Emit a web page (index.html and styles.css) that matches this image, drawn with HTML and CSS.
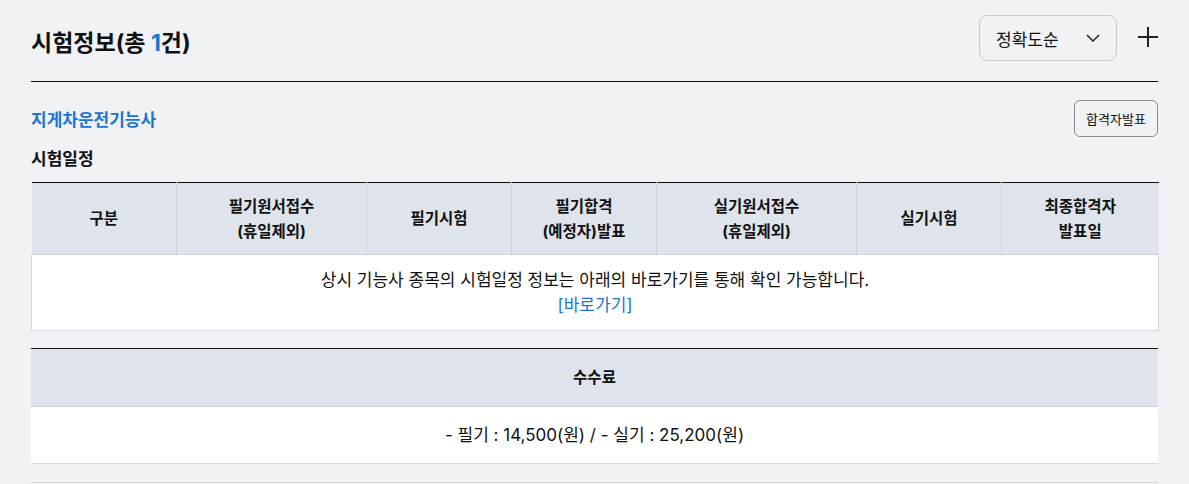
FILE: index.html
```html
<!DOCTYPE html>
<html lang="ko">
<head>
<meta charset="utf-8">
<title>시험정보</title>
<link rel="stylesheet" href="styles.css">
</head>
<body>
<div class="page">
  <div class="top">
    <h1 class="title">시험정보(총 <span class="count">1</span>건)</h1>
    <div class="tools">
      <div class="select">
        <span>정확도순</span>
        <svg class="chev" width="14" height="8" viewBox="0 0 14 8"><path d="M1 1 L7 7 L13 1" fill="none" stroke="#222" stroke-width="1.5"/></svg>
      </div>
      <svg class="plus" width="20" height="20" viewBox="0 0 20 20"><path d="M10 0 V20 M0 10 H20" stroke="#222" stroke-width="2" fill="none"/></svg>
    </div>
  </div>

  <div class="item-head">
    <a class="item-name">지게차운전기능사</a>
    <button class="btn">합격자발표</button>
  </div>
  <h2 class="sub">시험일정</h2>

  <table class="tbl sched">
    <colgroup>
      <col style="width:145px"><col style="width:190px"><col style="width:145px"><col style="width:145px"><col style="width:200px"><col style="width:145px"><col style="width:157px">
    </colgroup>
    <thead>
      <tr>
        <th>구분</th>
        <th>필기원서접수<br>(휴일제외)</th>
        <th>필기시험</th>
        <th>필기합격<br>(예정자)발표</th>
        <th>실기원서접수<br>(휴일제외)</th>
        <th>실기시험</th>
        <th>최종합격자<br>발표일</th>
      </tr>
    </thead>
    <tbody>
      <tr>
        <td colspan="7">상시 기능사 종목의 시험일정 정보는 아래의 바로가기를 통해 확인 가능합니다.<br><a class="link">[바로가기]</a></td>
      </tr>
    </tbody>
  </table>

  <table class="tbl fee">
    <thead><tr><th>수수료</th></tr></thead>
    <tbody><tr><td>- 필기 : 14,500(원) / - 실기 : 25,200(원)</td></tr></tbody>
  </table>

  <div class="next"></div>
</div>
</body>
</html>
```

FILE: styles.css
```css
* { box-sizing: border-box; }
html, body { margin: 0; padding: 0; }
body {
  background: #f1f2f6;
  font-family: "Inter", "Noto Sans CJK KR", sans-serif;
  color: #111;
}
.page {
  width: 1127px;
  margin-left: 31px;
}
.top {
  display: flex;
  justify-content: space-between;
  align-items: flex-start;
  padding-top: 15px;
  padding-bottom: 20px;
  border-bottom: 1px solid #111;
}
.title {
  margin: 12px 0 0;
  font-size: 23px;
  line-height: 32px;
  font-weight: 700;
  color: #111;
}
.count { color: #1b76d3; }
.tools {
  display: flex;
  align-items: center;
  gap: 21px;
}
.select {
  width: 138px;
  height: 46px;
  border: 1px solid #c9cacd;
  border-radius: 8px;
  display: flex;
  align-items: center;
  justify-content: space-between;
  padding: 0 16px 0 16px;
  font-size: 17px;
  color: #111;
}
.chev { display: block; }
.plus { display: block; margin-top: -2px; }
.item-head {
  display: flex;
  justify-content: space-between;
  align-items: center;
  margin-top: 18px;
}
.item-name {
  font-size: 17px;
  font-weight: 600;
  color: #1b76d3;
}
.btn {
  height: 37px;
  width: 84px;
  border: 1px solid #8a8a8a;
  border-radius: 6px;
  background: #f1f2f6;
  font-family: inherit;
  font-size: 13px;
  color: #111;
  padding: 0;
}
.sub {
  margin: 10px 0 0;
  font-size: 17px;
  line-height: 24px;
  font-weight: 700;
}
.tbl {
  width: 100%;
  border-collapse: collapse;
  table-layout: fixed;
  font-size: 17px;
  line-height: 25px;
}
.sched { margin-top: 11px; }
.tbl thead tr { border-top: 1px solid #111; }
.tbl th {
  background: #dfe3eb;
  font-size: 15.5px;
  font-weight: 700;
  text-align: center;
  border-right: 1px solid #cfd2d8;
  border-bottom: 1px solid #cfd2d8;
}
.tbl th:last-child { border-right: none; }
.sched th { height: 72px; padding: 0; }
.tbl td {
  background: #fff;
  text-align: center;
  border: 1px solid #d6d8dc;
  border-top: none;
}
.sched td { height: 76px; padding: 0; }
.link { color: #1b76d3; }
.fee { margin-top: 17px; }
.fee th { height: 58px; padding: 0; border-right: none; }
.fee td { height: 57px; padding: 0; border-left: none; border-right: none; }
.next {
  margin-top: 18px;
  border-top: 1px solid #d6d8dc;
  height: 2px;
}
```
